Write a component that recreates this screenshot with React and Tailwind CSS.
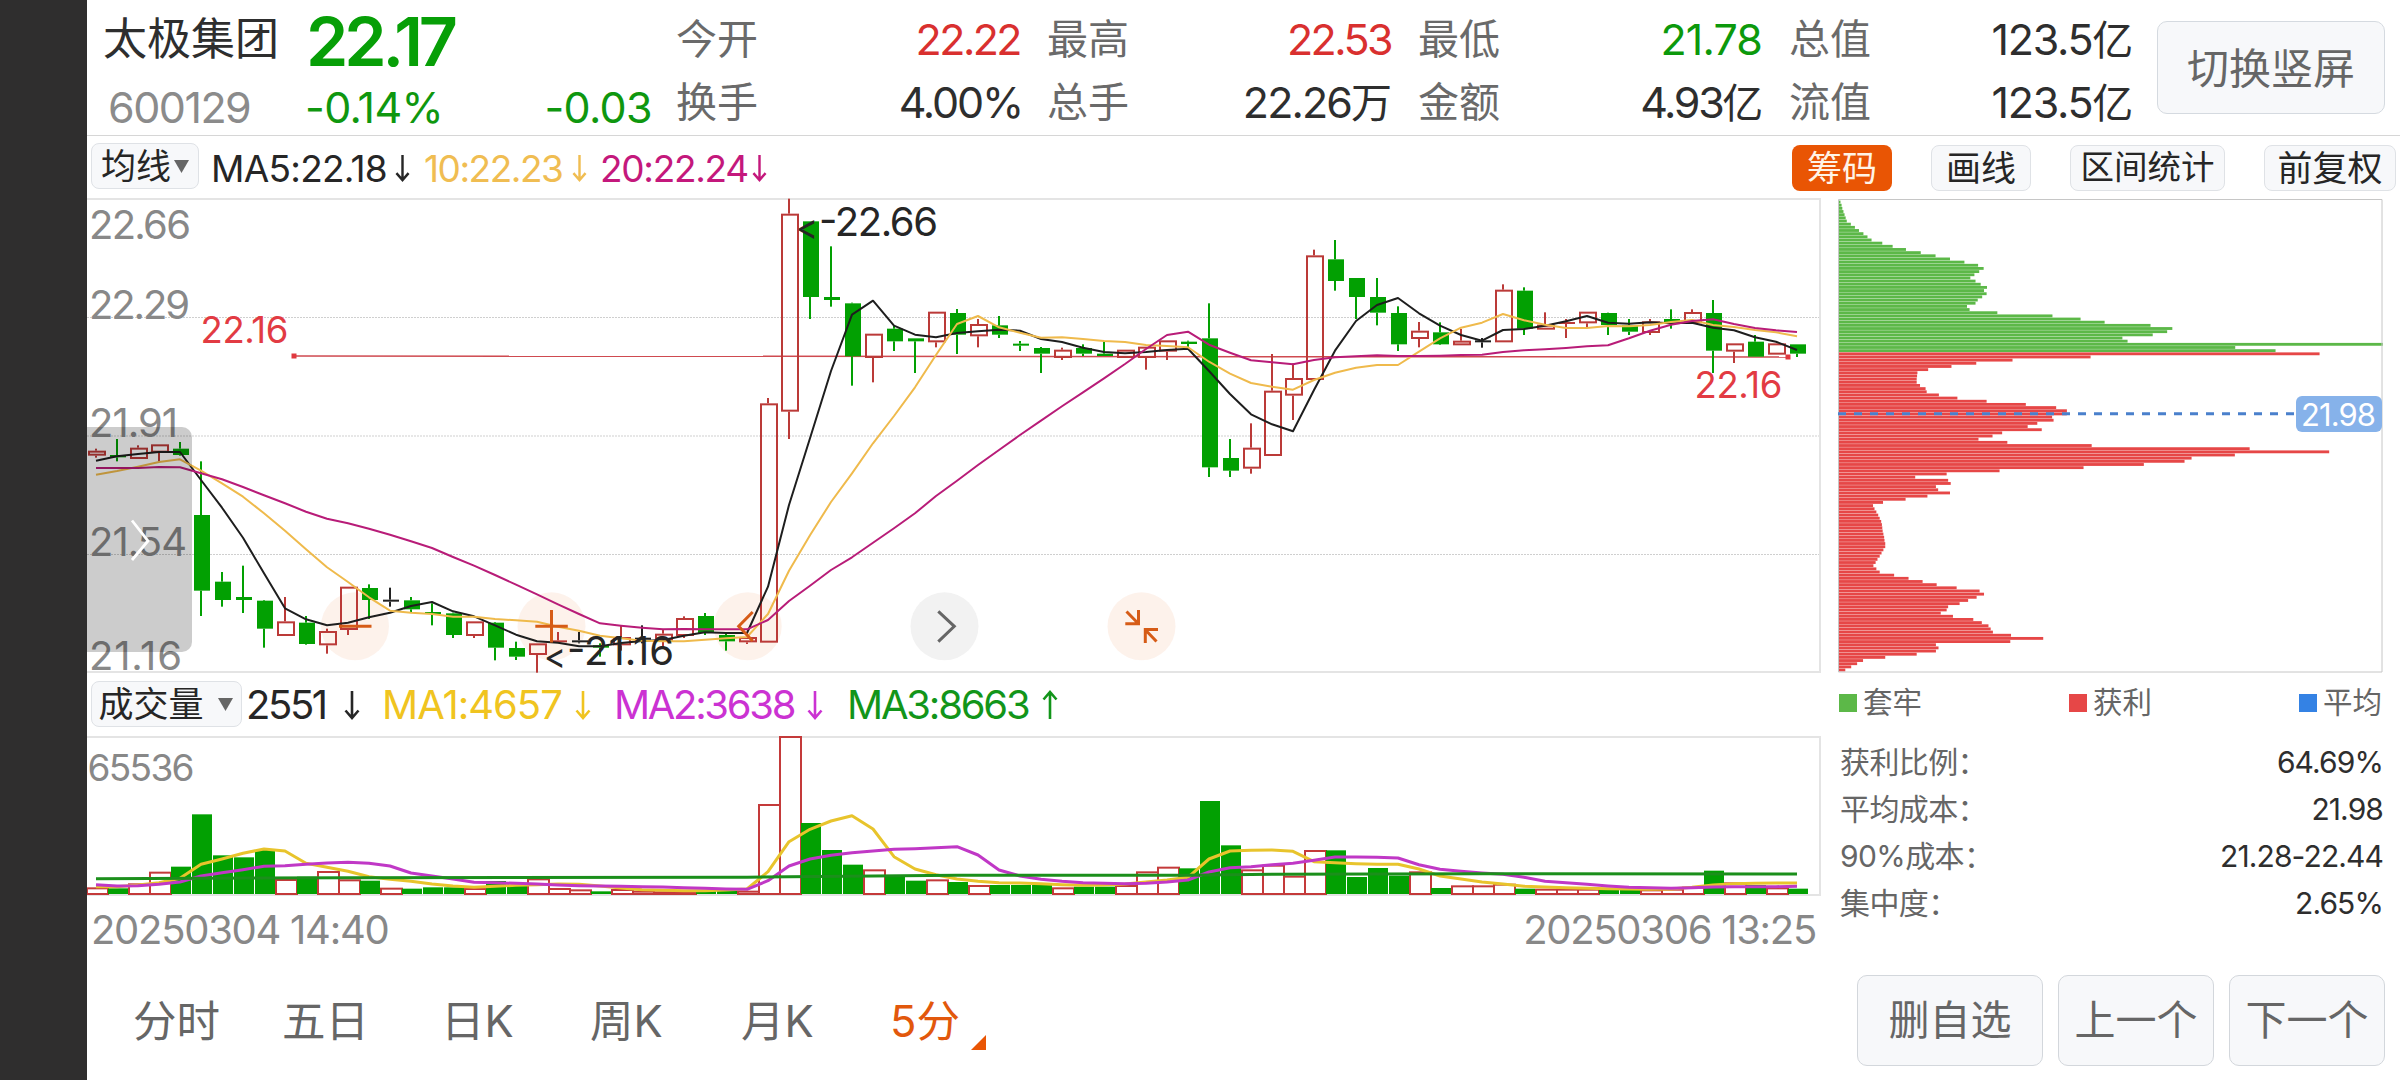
const SANS = 'font-["Inter","Noto_Sans_CJK_SC",sans-serif]';

/* ---------- market data (heights are in thirds of a pixel) ---------- */

// [kind, high, body top, body bottom, low]
const CANDLES = [
  ["r", 776, 782, 797, 803], ["g", 747, 795, 802, 814], ["r", 766, 773, 807, 807], ["r", 763, 763, 788, 814],
  ["g", 756, 776, 795, 797], ["g", 814, 975, 1202, 1278], ["g", 1146, 1175, 1230, 1250], ["g", 1127, 1221, 1230, 1269],
  ["g", 1230, 1232, 1316, 1373], ["r", 1221, 1294, 1338, 1338], ["g", 1278, 1298, 1362, 1364], ["r", 1316, 1323, 1366, 1391],
  ["r", 1190, 1190, 1320, 1335], ["g", 1183, 1194, 1230, 1287], ["k", 1193, 1229, 1235, 1250], ["g", 1221, 1231, 1258, 1268],
  ["g", 1240, 1266, 1271, 1306], ["g", 1268, 1270, 1335, 1344], ["r", 1294, 1294, 1338, 1344], ["g", 1296, 1298, 1373, 1411],
  ["g", 1355, 1374, 1400, 1410], ["r", 1360, 1360, 1395, 1448], ["r", 1326, 1351, 1357, 1358], ["k", 1326, 1351, 1357, 1360],
  ["g", 1360, 1366, 1373, 1400], ["r", 1307, 1341, 1366, 1382], ["k", 1306, 1343, 1348, 1360], ["r", 1318, 1331, 1352, 1373],
  ["r", 1279, 1284, 1338, 1344], ["g", 1269, 1278, 1329, 1335], ["g", 1329, 1335, 1354, 1382], ["r", 1341, 1341, 1357, 1362],
  ["r", 624, 640, 1358, 1358], ["r", 26, 71, 665, 747], ["g", 94, 94, 321, 387], ["g", 169, 321, 330, 350],
  ["g", 338, 340, 499, 587], ["r", 431, 431, 504, 577], ["g", 407, 416, 454, 483], ["g", 445, 445, 454, 549],
  ["r", 365, 365, 457, 472], ["g", 357, 369, 434, 492], ["r", 387, 402, 439, 472], ["g", 378, 406, 434, 444],
  ["g", 453, 461, 467, 483], ["g", 471, 474, 491, 549], ["r", 473, 479, 504, 510], ["g", 463, 474, 491, 498],
  ["g", 454, 491, 498, 498], ["r", 479, 479, 504, 504], ["r", 470, 470, 504, 539], ["r", 451, 451, 485, 510],
  ["g", 452, 455, 462, 474], ["g", 340, 445, 832, 861], ["g", 747, 804, 842, 861], ["r", 700, 773, 836, 851],
  ["r", 492, 602, 798, 798], ["r", 520, 564, 617, 690], ["r", 179, 196, 570, 570], ["g", 150, 208, 273, 302],
  ["g", 264, 264, 321, 387], ["g", 264, 321, 368, 406], ["g", 349, 369, 463, 483], ["r", 396, 422, 447, 472],
  ["g", 397, 427, 463, 465], ["r", 417, 452, 466, 466], ["k", 444, 451, 457, 473], ["r", 283, 299, 457, 457],
  ["g", 292, 302, 416, 435], ["r", 367, 404, 419, 419], ["r", 387, 396, 401, 444], ["r", 365, 365, 400, 412],
  ["g", 368, 369, 405, 435], ["g", 387, 406, 425, 435], ["r", 387, 394, 429, 435], ["g", 358, 387, 396, 416],
  ["r", 358, 366, 400, 402], ["g", 330, 369, 482, 549], ["r", 460, 460, 485, 519], ["g", 435, 455, 500, 500],
  ["r", 460, 460, 494, 494], ["g", 463, 463, 491, 501],
];

const MA5 = [
  812, 799, 792, 786, 786, 870, 953, 1043, 1150, 1255, 1288, 1306, 1298, 1282, 1268, 1248, 1236, 1264, 1279, 1306, 1334,
  1354, 1358, 1369, 1369, 1359, 1353, 1350, 1337, 1327, 1329, 1329, 1190, 945, 745, 543, 374, 332, 407, 434, 442, 429,
  424, 419, 422, 447, 456, 473, 486, 490, 486, 480, 476, 543, 612, 673, 703, 724, 600, 482, 393, 345, 324, 370, 407, 435,
  452, 420, 417, 407, 394, 378, 398, 401, 397, 400, 398, 413, 421, 442, 455, 480,
];
const MA10 = [
  854, 843, 830, 816, 808, 842, 880, 920, 970, 1022, 1078, 1132, 1176, 1222, 1262, 1268, 1272, 1280, 1280, 1287, 1291,
  1295, 1310, 1322, 1337, 1345, 1352, 1354, 1354, 1349, 1345, 1341, 1272, 1142, 1036, 936, 850, 760, 678, 592, 495, 402,
  378, 412, 428, 443, 442, 447, 453, 456, 465, 468, 472, 515, 551, 579, 590, 599, 570, 548, 533, 525, 525, 485, 445, 413,
  398, 372, 391, 404, 414, 414, 408, 409, 405, 396, 390, 405, 411, 420, 427, 439,
];
const MA20 = [
  834, 834, 834, 831, 832, 850, 868, 891, 916, 940, 965, 986, 1000, 1016, 1034, 1054, 1074, 1101, 1127, 1155, 1184, 1213,
  1243, 1272, 1300, 1307, 1313, 1318, 1317, 1318, 1318, 1318, 1290, 1233, 1187, 1140, 1102, 1058, 1015, 970, 918, 872,
  825, 780, 735, 692, 649, 607, 565, 522, 477, 435, 425, 464, 488, 511, 517, 523, 510, 502, 499, 496, 498, 498, 497, 495,
  494, 486, 481, 478, 474, 469, 466, 445, 422, 404, 393, 388, 402, 414, 421, 426,
];

const VOLUMES = [
  652, 655, 640, 605, 590, 433, 556, 562, 540, 627, 620, 603, 628, 632, 653, 656, 652, 652, 654, 633, 648, 625, 654, 658,
  664, 657, 662, 664, 664, 662, 662, 662, 402, 198, 459, 540, 584, 598, 616, 632, 628, 636, 645, 645, 645, 645, 652, 650,
  650, 645, 604, 590, 595, 393, 526, 598, 584, 617, 540, 541, 621, 594, 617, 604, 654, 646, 646, 641, 656, 656, 656, 656,
  658, 658, 658, 656, 650, 602, 637, 645, 652, 656,
];
const VMA1 = [
  650, 650, 645, 638, 625, 583, 567, 550, 537, 543, 580, 592, 604, 620, 628, 634, 642, 648, 652, 649, 646, 644, 642, 643,
  648, 654, 659, 661, 662, 662, 660, 657, 605, 515, 478, 453, 437, 477, 560, 597, 614, 627, 634, 638, 639, 641, 644, 646,
  645, 642, 636, 630, 622, 567, 543, 541, 540, 544, 575, 578, 581, 583, 583, 597, 618, 627, 636, 642, 649, 651, 653, 655,
  656, 657, 658, 657, 652, 645, 641, 640, 639, 639,
];
const VMA2 = [
  644, 648, 647, 643, 636, 618, 608, 599, 589, 587, 583, 579, 577, 580, 588, 609, 618, 627, 637, 638, 640, 642, 645, 647,
  648, 649, 650, 651, 653, 655, 657, 658, 632, 588, 567, 556, 548, 543, 538, 536, 533, 530, 555, 600, 618, 628, 634, 638,
  640, 641, 640, 636, 630, 606, 593, 590, 584, 580, 571, 561, 561, 562, 564, 584, 598, 604, 609, 613, 622, 634, 638, 643,
  648, 652, 653, 655, 653, 651, 650, 650, 650, 649,
];
const VMA3 = [[0, 626], [12, 623], [31, 622], [33, 620], [41, 616], [52, 616], [56, 613], [66, 611], [81, 612]];

const TRAPPED = [
  54, 57, 59, 62, 65, 68, 71, 82, 93, 104, 116, 127, 138, 167, 195, 231, 271, 311, 350, 389, 426, 441, 429, 416, 405, 419,
  433, 450, 442, 449, 437, 425, 419, 396, 403, 478, 627, 703, 768, 892, 951, 937, 898, 816, 830, 1520, 1121, 1230,
];
const PROFIT = [
  1349, 730, 519, 421, 354, 291, 262, 261, 260, 260, 269, 284, 287, 320, 370, 449, 555, 637, 666, 666, 626, 630, 586, 560,
  598, 491, 465, 427, 505, 733, 1160, 1375, 1120, 1003, 984, 874, 711, 484, 341, 256, 345, 352, 312, 318, 350, 289, 230,
  169, 142, 146, 151, 156, 160, 164, 166, 167, 168, 170, 172, 173, 175, 175, 170, 165, 160, 154, 149, 143, 151, 160, 199,
  238, 276, 314, 368, 430, 442, 422, 399, 376, 345, 341, 325, 358, 413, 436, 454, 460, 466, 515, 602, 513, 312, 319, 312,
  260, 175, 115, 99, 83, 67,
];

const QUOTES = [
  [["今开", "22.22", "", "text-[#d9302f] tracking-[-0.06em]"], ["换手", "4.00%", "", "text-[#2e2e2e] tracking-[-0.05em] mr-[-2px]"]],
  [["最高", "22.53", "", "text-[#d9302f] tracking-[-0.06em]"], ["总手", "22.26", "万", "text-[#2e2e2e] tracking-[-0.045em]"]],
  [["最低", "21.78", "", "text-[#0c990c] tracking-[-0.02em]"], ["金额", "4.93", "亿", "text-[#2e2e2e] tracking-[-0.055em]"]],
  [["总值", "123.5", "亿", "text-[#2e2e2e] tracking-[-0.03em]"], ["流值", "123.5", "亿", "text-[#2e2e2e] tracking-[-0.03em]"]],
];

/* ---------- helpers ---------- */

const cx = (i) => 9 + 21 * i;
const py = (v) => (v - 24) / 3;
const vy = (v) => (v - 198) / 3;
const line = (arr, fy) => arr.map((v, i) => `${cx(i)},${fy(v).toFixed(1)}`).join(" ");

const RED = "#bb3a38";
const GREEN = "#02a002";
const TONE = { r: RED, g: GREEN, k: "#222222" };

function Arrow({ up, className }) {
  return (
    <svg className={className} width="16" height="30" viewBox="0 0 16 30" fill="none" stroke="currentColor" strokeWidth="2.6">
      {up ? <path d="M8 29V2M1.5 9.5 8 2l6.5 7.5" /> : <path d="M8 1v27M1.5 20.5 8 28l6.5-7.5" />}
    </svg>
  );
}

function Caret() {
  return (
    <svg width="15" height="13" viewBox="0 0 15 13" fill="#666">
      <path d="M0 0h15L7.5 13z" />
    </svg>
  );
}

/* ---------- top quote header ---------- */

function Header() {
  return (
    <header className="flex h-[136px] shrink-0 border-b border-[#d6d6d6]">
      <div className="w-[589px] pl-[16px]">
        <div className="flex h-[78px] items-center">
          <span className="w-[203px] text-[44px] leading-none text-[#2e2e2e]">太极集团</span>
          <span className="pt-[4px] text-[68px] leading-none font-semibold tracking-[-0.06em] text-[#079f07]">22.17</span>
        </div>
        <div className="flex h-[58px] items-center text-[43px] leading-none tracking-[-0.015em]">
          <span className="w-[202px] pl-[5px] tracking-[-0.035em] text-[#8b8b8b]">600129</span>
          <span className="flex-1 text-[#0f970f]">-0.14%</span>
          <span className="pr-[24px] text-[#0f970f]">-0.03</span>
        </div>
      </div>
      <div className="flex gap-[27px]">
        {QUOTES.map((col, i) => (
          <div key={i} className="w-[344px] pt-[8px]">
            {col.map(([label, value, unit, tone]) => (
              <div key={label} className="flex h-[63px] items-center justify-between leading-none">
                <span className="text-[41px] text-[#6a6a6a]">{label}</span>
                <span className={`text-[43px] ${tone}`}>
                  {value}
                  {unit && <span className="mr-[1px] text-[41px]">{unit}</span>}
                </span>
              </div>
            ))}
          </div>
        ))}
      </div>
      <button className="mt-[21px] ml-[24px] h-[93px] w-[228px] rounded-[10px] border border-[#d5dae0] bg-[#f7f8fa] pt-[2px] text-[42px] leading-none text-[#666]">
        切换竖屏
      </button>
    </header>
  );
}

function Toolbar() {
  const btn = "flex h-[46px] items-center justify-center rounded-[8px] border border-[#dfe2e6] bg-[#f7f8fa] leading-none";
  return (
    <div className="flex h-[62px] shrink-0 items-start pt-[7px] text-[35px] leading-none text-[#262626]">
      <button className={`${btn} ml-[4px] w-[108px] gap-[3px]`}>
        均线
        <Caret />
      </button>
      <div className="flex h-[50px] items-center text-[37px] tracking-[-0.04em]">
        <span className="ml-[12px] w-[184px] tracking-[-0.02em]">MA5:22.18</span>
        <Arrow className="h-[28px] w-[15px]" />
        <span className="ml-[14px] w-[148px]  text-[#f0bd52]">10:22.23</span>
        <Arrow className="h-[28px] w-[15px] text-[#f0bd52]" />
        <span className="ml-[13px] w-[152px] tracking-[-0.035em] text-[#c4187c]">20:22.24</span>
        <Arrow className="h-[28px] w-[15px] text-[#c4187c]" />
      </div>
      <div className="mt-[2px] ml-auto flex gap-[39px] pr-[4px]">
        <button className="flex h-[46px] w-[100px] items-center justify-center rounded-[8px] bg-[#e95504] leading-none text-[#fff4e6]">筹码</button>
        <button className={`${btn} w-[100px]`}>画线</button>
        <button className={`${btn} w-[155px] text-[33.5px]`}>区间统计</button>
        <button className={`${btn} w-[132px]`}>前复权</button>
      </div>
    </div>
  );
}

/* ---------- candlestick chart ---------- */

function Candle({ i, d: [kind, hi, top, bot, lo] }) {
  const c = cx(i);
  const color = TONE[kind];
  const h = (bot - top) / 3;
  const hollow = kind === "r" && h > 3;
  return (
    <g>
      {top > hi && <rect x={c - 1} y={py(hi)} width="2" height={(top - hi) / 3} fill={color} />}
      {lo > bot && <rect x={c - 1} y={py(bot)} width="2" height={(lo - bot) / 3} fill={color} />}
      {hollow ? (
        <rect x={c - 7} y={py(top) + 1} width="16" height={h - 2} fill="none" stroke={color} strokeWidth="2" />
      ) : (
        <rect x={c - 7} y={py(top)} width="16" height={Math.max(h, 2)} fill={color} />
      )}
    </g>
  );
}

function PriceChart() {
  return (
    <svg className="block overflow-visible" width="1734" height="475" viewBox="0 0 1734 475" fill="none">
      <path d="M0 1h1733v473H0" stroke="#e4e4e4" strokeWidth="2" />
      {[119.5, 238, 356.5].map((y) => (
        <path key={y} d={`M0 ${y}H1732`} stroke="#cfcfcf" strokeWidth="1" strokeDasharray="2 1" />
      ))}

      <g fill="#e95504" fillOpacity="0.08">
        <circle cx="268" cy="428.3" r="34" />
        <circle cx="464.5" cy="428.3" r="34" />
        <circle cx="660.7" cy="428.3" r="34" />
        <circle cx="1054.5" cy="428.3" r="34" />
      </g>
      <circle cx="857.5" cy="428.3" r="34" fill="#f2f2f2" />

      <g fill="#888888" fontSize="40">
        <text x="2" y="40.5" textLength="102">22.66</text>
        <text x="2" y="121" textLength="101">22.29</text>
        <text x="2" y="239" textLength="89">21.91</text>
        <text x="2" y="358" textLength="98">21.54</text>
        <text x="2" y="472" textLength="93">21.16</text>
      </g>

      <path d="M207 158 1701 159" stroke="#cf4a50" strokeWidth="1.5" />
      {CANDLES.map((d, i) => (
        <Candle key={i} i={i} d={d} />
      ))}

      <g strokeWidth="2" strokeLinejoin="round">
        <polyline points={line(MA5, py)} stroke="#1e1e1e" />
        <polyline points={line(MA10, py)} stroke="#efba4c" />
        <polyline points={line(MA20, py)} stroke="#b81c78" />
      </g>

      <rect x="204.5" y="155.5" width="5" height="5" fill="#e0383f" />
      <rect x="1698.5" y="156.5" width="5" height="5" fill="#e0383f" />
      <g fill="#e23b43" fontSize="36.5">
        <text x="113.5" y="144.5" textLength="88">22.16</text>
        <text x="1607.5" y="199.5" textLength="88">22.16</text>
      </g>

      <g fill="#262626" fontSize="40">
        <text x="709" y="42" fontSize="36" textLength="22" lengthAdjust="spacingAndGlyphs">&lt;</text>
        <text x="732" y="38" textLength="119">-22.66</text>
        <text x="457" y="471" fontSize="36" textLength="22" lengthAdjust="spacingAndGlyphs">&lt;</text>
        <text x="480" y="467" textLength="107">-21.16</text>
      </g>

      <g stroke="#d65c17" strokeWidth="3">
        <path d="M252 428.3h32.5" />
        <path d="M448.3 428.3h32.5M464.5 412v32.500" />
        <path d="M665.7 414 651.7 428.3l14 14.700" />
        <path d="M1038.300 425.700H1051.500V412M1039.500 413.500 1051 425.200M1071 431.500H1058.300V445M1069.500 443.500 1058.500 432" />
      </g>
      <path d="M851.3 413.3 867.3 428.3 851.3 443.7" stroke="#666" strokeWidth="3" />

      <path d="M0 229h95a10 10 0 0 1 10 10v205a10 10 0 0 1-10 10H0z" fill="#000" fillOpacity="0.2" />
      <path d="M45 322.5 61 343 45 362" stroke="#fff" strokeWidth="2.8" />
    </svg>
  );
}

/* ---------- volume chart ---------- */

function VolumeHeader() {
  return (
    <div className="flex h-[63px] items-center text-[40px] leading-none tracking-[-0.06em] text-[#262626]">
      <button className="mb-px ml-[4px] flex h-[46px] w-[151px] items-center justify-center gap-[14px] rounded-[8px] border border-[#dfe2e6] bg-[#f7f8fa] pr-[2px] text-[35px] leading-none tracking-normal">
        成交量
        <Caret />
      </button>
      <span className="ml-[4px] w-[98px]">2551</span>
      <Arrow />
      <span className="ml-[22px] w-[193px] tracking-[-0.025em] text-[#f0c420]">MA1:4657</span>
      <Arrow className="text-[#f0c420]" />
      <span className="ml-[23px] w-[193px] tracking-[-0.058em] text-[#cb32d2]">MA2:3638</span>
      <Arrow className="text-[#cb32d2]" />
      <span className="ml-[24px] w-[195px] tracking-[-0.055em] text-[#12951a]">MA3:8663</span>
      <Arrow up className="text-[#12951a]" />
    </div>
  );
}

function VolumeChart() {
  return (
    <svg className="block" width="1734" height="160" viewBox="0 0 1734 160" fill="none">
      <path d="M0 1h1733v158H0" stroke="#e4e4e4" strokeWidth="2" />
      <text x="0.5" y="44.5" fontSize="37" fill="#888888" textLength="107">65536</text>
      {VOLUMES.map((v, i) => {
        const red = CANDLES[i][0] !== "g" || i === 75;
        const top = vy(v);
        return red ? (
          <rect key={i} x={cx(i) - 9} y={top + 1} width="21" height={157 - top} stroke="#c43a3a" strokeWidth="2" />
        ) : (
          <rect key={i} x={cx(i) - 9} y={top} width="20" height={158 - top} fill={GREEN} />
        );
      })}
      <g strokeWidth="3" strokeLinejoin="round">
        <polyline points={line(VMA1, vy)} stroke="#e8c42c" />
        <polyline points={line(VMA2, vy)} stroke="#c038c6" />
        <polyline points={VMA3.map(([i, v]) => `${cx(i)},${vy(v)}`).join(" ")} stroke="#1b8f1b" />
      </g>
    </svg>
  );
}

/* ---------- chip distribution ---------- */

function ChipChart() {
  const rows = [...TRAPPED.map((v) => [v, "#5cb848"]), ...PROFIT.map((v) => [v, "#e64747"])];
  const pitch = 468 / (rows.length - 1);
  return (
    <svg className="block" width="545" height="475" viewBox="0 0 545 475" fill="none">
      {rows.map(([v, fill], i) => (
        <rect key={i} x="1" y={2.6 + i * pitch} width={(v - 50) / 2.703} height="2.85" fill={fill} />
      ))}
      <path d="M.5 1.5h543.5v472.5H.5z" stroke="#c6c6c6" />
      <path d="M0 215.7h456" stroke="#4a80cc" strokeWidth="3" strokeDasharray="8 8" />
      <rect x="458" y="198" width="86" height="36" rx="6" fill="#86b2ea" />
      <text x="463" y="227.5" fontSize="31" fill="#fff" textLength="75">21.98</text>
    </svg>
  );
}

function ChipPanel() {
  const legend = [["套牢", "bg-[#5cb848]"], ["获利", "bg-[#e64747]"], ["平均", "bg-[#3482e4]"]];
  const stats = [["获利比例：", "64.69%"], ["平均成本：", "21.98"], ["90%成本：", "21.28-22.44"], ["集中度：", "2.65%"]];
  return (
    <aside className="ml-[17px] w-[545px]">
      <ChipChart />
      <div className="flex h-[60px] items-center justify-between pr-px pl-px text-[29.5px] leading-none text-[#666]">
        {legend.map(([t, bg]) => (
          <div key={t} className="flex items-center gap-[6px]">
            <span className={`h-[18px] w-[18px] ${bg}`} />
            {t}
          </div>
        ))}
      </div>
      <dl className="pt-[5px]">
        {stats.map(([k, v]) => (
          <div key={k} className="flex h-[47px] items-center justify-between text-[30px] leading-none">
            <dt className="pl-[2px] tracking-[-0.02em] text-[#666]">{k}</dt>
            <dd className="tracking-[-0.03em] text-[#2e2e2e]">{v}</dd>
          </div>
        ))}
      </dl>
    </aside>
  );
}

/* ---------- bottom bar ---------- */

function BottomBar() {
  const tabs = [["分时", "w-[149px]"], ["五日", "w-[159px]"], ["日K", "w-[149px]"], ["周K", "w-[151px]"], ["月K", "w-[149px]"]];
  const btn = "h-[91px] rounded-[10px] border border-[#d3d7dc] bg-[#f7f8fa] text-[41px] leading-none text-[#666]";
  return (
    <footer className="flex h-[120px] items-start">
      <nav className="flex h-[123px] items-center pl-[46px] text-[43.5px] leading-none text-[#666]">
        {tabs.map(([t, w]) => (
          <span key={t} className={w}>{t}</span>
        ))}
        <span className="flex items-center text-[#e2580c]">
          5分
          <svg className="mt-[41px] ml-[11px]" width="15" height="15" viewBox="0 0 15 15" fill="#e95504">
            <path d="M15 0v15H0z" />
          </svg>
        </span>
      </nav>
      <div className="mt-[15px] ml-auto flex gap-[15px] pr-[15px]">
        <button className={`${btn} w-[186px]`}>删自选</button>
        <button className={`${btn} w-[156px]`}>上一个</button>
        <button className={`${btn} w-[156px]`}>下一个</button>
      </div>
    </footer>
  );
}

export default function App() {
  return (
    <div className={`flex h-[1080px] w-[2400px] overflow-hidden bg-white ${SANS}`}>
      <div className="w-[87px] shrink-0 bg-[#2f2e2e]" />
      <main className="flex w-[2313px] flex-col">
        <Header />
        <Toolbar />
        <div className="flex h-[762px] shrink-0">
          <section className="w-[1734px]">
            <PriceChart />
            <VolumeHeader />
            <VolumeChart />
            <div className="flex items-center justify-between pt-[14px] pr-[5px] pl-[4px] text-[40px] leading-none tracking-[-0.032em] text-[#888]">
              <span>20250304 14:40</span>
              <span>20250306 13:25</span>
            </div>
          </section>
          <ChipPanel />
        </div>
        <BottomBar />
      </main>
    </div>
  );
}
